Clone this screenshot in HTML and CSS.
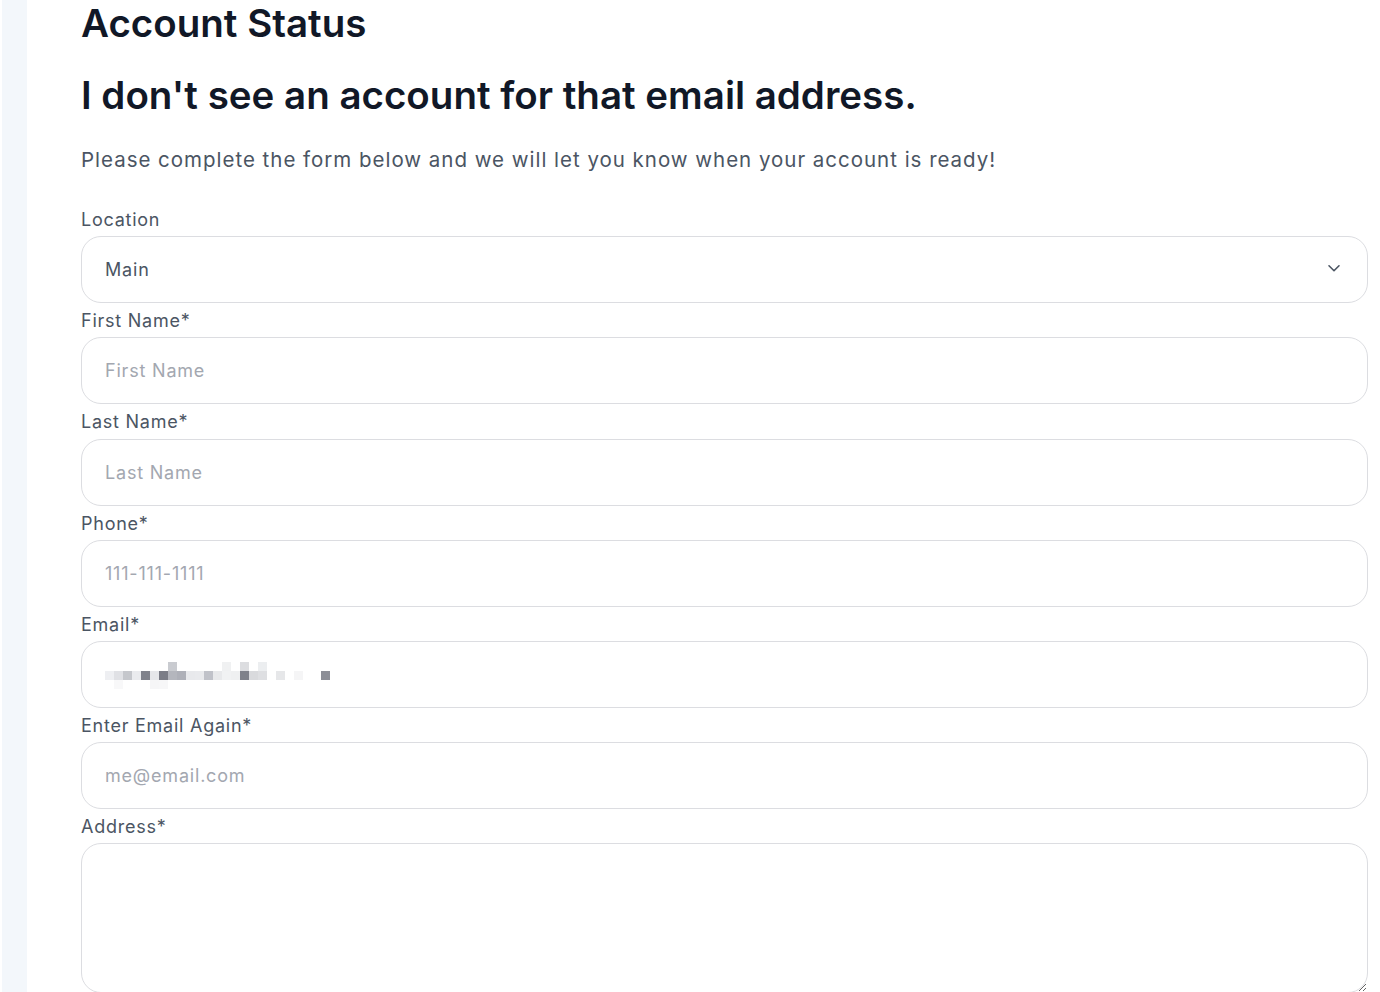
FILE: index.html
```html
<!DOCTYPE html>
<html lang="en">
<head>
    <meta charset="UTF-8">
    <meta name="viewport" content="width=device-width, initial-scale=1.0">
    <title>Account Status</title>
    <link rel="stylesheet" href="styles.css">
</head>
<body>
    <div class="page">
        <div class="sidebar"></div>
        <div class="main">
            <h1 class="title">Account Status</h1>
            <h2 class="subtitle">I don't see an account for that email address.</h2>
            <p class="intro">Please complete the form below and we will let you know when your account is ready!</p>

            <form class="signup">
                <div class="form-group">
                    <label for="location">Location</label>
                    <div class="select-wrap">
                        <select id="location" name="location">
                            <option>Main</option>
                        </select>
                        <svg class="chevron" width="16" height="16" viewBox="0 0 16 16" fill="none">
                            <path d="M3 5.75l5 5 5-5" stroke="#4b5563" stroke-width="1.6" stroke-linecap="round" stroke-linejoin="round"/>
                        </svg>
                    </div>
                </div>
                <div class="form-group">
                    <label for="firstName">First Name*</label>
                    <input type="text" id="firstName" placeholder="First Name">
                </div>
                <div class="form-group">
                    <label for="lastName">Last Name*</label>
                    <input type="text" id="lastName" placeholder="Last Name">
                </div>
                <div class="form-group">
                    <label for="phone">Phone*</label>
                    <input type="text" id="phone" placeholder="111-111-1111">
                </div>
                <div class="form-group">
                    <label for="email">Email*</label>
                    <!-- value is pixelated in the screenshot -->
                    <div class="field redacted" id="email">
                        <div class="px-row">
                            <span></span><span></span><span></span><span></span><span></span>
                            <span></span><span></span><span style="background:#c9cbd0"></span><span></span><span></span>
                            <span></span><span></span><span></span><span style="background:#f0f1f2"></span><span></span>
                            <span style="background:#dcdde0"></span><span></span><span style="background:#eceef0"></span><span></span><span></span>
                            <span></span><span></span><span></span><span></span><span></span>
                        </div>
                        <div class="px-row">
                            <span style="background:#eeeff2"></span><span style="background:#e0e1e5"></span><span style="background:#c5c7cc"></span><span style="background:#eaebee"></span><span style="background:#80828b"></span>
                            <span style="background:#e6e7ea"></span><span style="background:#7b7d87"></span><span style="background:#b4b6bd"></span><span style="background:#aeb0b8"></span><span style="background:#e8e9ec"></span>
                            <span style="background:#e9eaed"></span><span style="background:#c0c2c9"></span><span style="background:#e8e9eb"></span><span style="background:#f1f2f3"></span><span style="background:#eff0f1"></span>
                            <span style="background:#7f818a"></span><span style="background:#d9dadd"></span><span style="background:#dedfe2"></span><span></span><span style="background:#e6e7e9"></span>
                            <span></span><span style="background:#f5f5f6"></span><span></span><span></span><span style="background:#8d8f97"></span>
                        </div>
                        <div class="px-row">
                            <span></span><span style="background:#f8f8f9"></span><span></span><span></span><span></span>
                            <span style="background:#f6f6f7"></span><span style="background:#f7f7f8"></span><span></span><span></span><span></span>
                            <span></span><span></span><span></span><span></span><span></span>
                            <span></span><span></span><span></span><span></span><span></span>
                            <span></span><span></span><span></span><span></span><span></span>
                        </div>
                    </div>
                </div>
                <div class="form-group">
                    <label for="email2">Enter Email Again*</label>
                    <input type="text" id="email2" placeholder="me@email.com">
                </div>
                <div class="form-group">
                    <label for="address">Address*</label>
                    <textarea id="address"></textarea>
                </div>
            </form>
        </div>
    </div>
</body>
</html>
```

FILE: styles.css
```css
body {
    font-family: Inter, "Noto Sans", sans-serif;
    margin: 0;
    padding: 0;
    background-color: white;
    color: #111827;
}
.page {
    display: flex;
    min-height: 992px;
}
.sidebar {
    width: 25px;
    margin-left: 2px;
    background-color: #f3f7fb;
    flex-shrink: 0;
}
.main {
    flex: 1;
    padding: 0 12px 0 54px;
}
.title {
    font-size: 38.5px;
    font-weight: 600;
    line-height: 46px;
    margin: 0;
}
.subtitle {
    font-size: 38.5px;
    font-weight: 600;
    line-height: 46px;
    margin: 26px 0 0;
}
.intro {
    font-size: 20.5px;
    line-height: 30px;
    letter-spacing: 0.98px;
    color: #4b5563;
    margin: 27px 0 0;
}
.signup {
    margin-top: 27px;
}
.form-group label {
    display: block;
    font-size: 18px;
    line-height: 33.17px;
    padding-top: 1px;
    letter-spacing: 0.75px;
    color: #4b5563;
}
input[type="text"], select, .field, textarea {
    display: block;
    box-sizing: border-box;
    width: 100%;
    height: 67px;
    padding: 0 23px;
    border: 1px solid #dcdde1;
    border-radius: 20px;
    background: white;
    font-family: inherit;
    font-size: 18px;
    letter-spacing: 0.8px;
    color: #4b5563;
    outline: none;
}
input::placeholder {
    color: #a3a7b0;
}
.select-wrap {
    position: relative;
}
select {
    appearance: none;
    -webkit-appearance: none;
}
.chevron {
    position: absolute;
    right: 26px;
    top: 24px;
    pointer-events: none;
}
.field.redacted {
    display: flex;
    flex-direction: column;
    justify-content: center;
    padding-top: 3px;
}
.px-row {
    display: flex;
}
.px-row span {
    width: 9px;
    height: 9px;
}
textarea {
    height: 150px;
    padding: 16px 23px;
    resize: vertical;
}
```
